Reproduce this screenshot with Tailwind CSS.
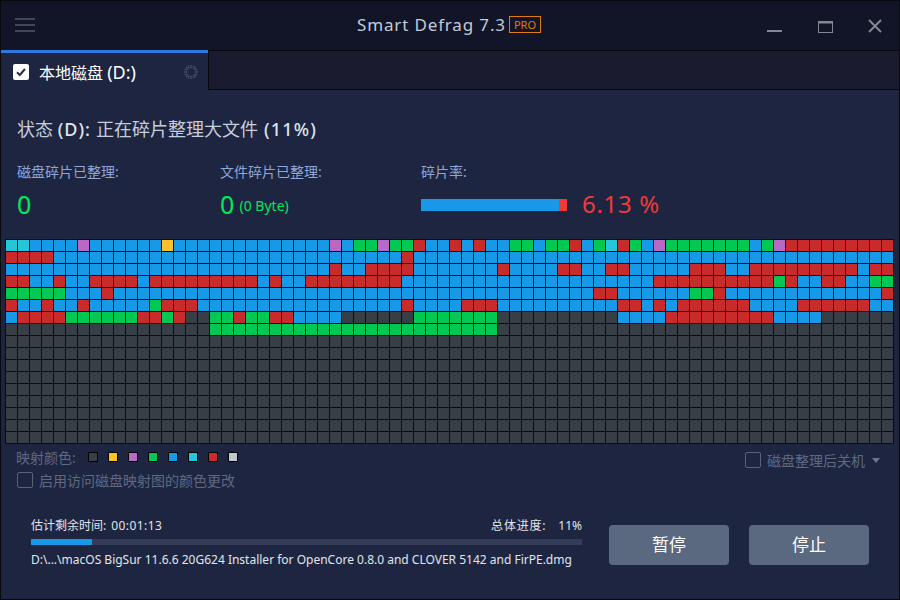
<!DOCTYPE html>
<html lang="zh">
<head>
<meta charset="utf-8">
<script src="https://cdn.jsdelivr.net/npm/@tailwindcss/browser@4"></script>
</head>
<body class="m-0 bg-[#1e2540]">
<div class="w-[900px] h-[600px] overflow-hidden flex flex-col border border-[#08090f] bg-[#1e2540] font-['Noto_Sans','Noto_Sans_CJK_SC',sans-serif] text-[#c8d0dc]">

  <!-- Title bar -->
  <header class="h-[49px] shrink-0 bg-[#121527] flex items-center pl-[14px] relative">
    <div class="flex flex-col gap-1 w-5 -mt-px">
      <span class="h-[2px] bg-[#41465a]"></span>
      <span class="h-[2px] bg-[#41465a]"></span>
      <span class="h-[2px] bg-[#41465a]"></span>
    </div>
    <div class="ml-[322px] flex items-center -mt-[2px]">
      <span class="text-[17px] tracking-[0.85px] text-[#c4ccd8]">Smart Defrag 7.3</span>
      <span class="ml-[3px] border border-[#e07b10] text-[#e07b10] text-[11px] leading-[15px] px-[4px]">PRO</span>
    </div>
    <div class="ml-auto flex items-center">
      <svg class="w-[16px] h-[16px] mr-[35px] mt-[1px]" viewBox="0 0 16 16"><rect x="0" y="12" width="15" height="2" fill="#808894"/></svg>
      <svg class="w-[16px] h-[16px] mr-[34px] mt-[1px]" viewBox="0 0 16 16" fill="none"><rect x="0.5" y="3.5" width="14" height="11" stroke="#808894"/><rect x="0" y="3" width="15" height="2.5" fill="#808894"/></svg>
      <svg class="w-[14px] h-[14px] mr-[17px] mt-[1px]" viewBox="0 0 14 14" fill="none"><path d="M1 1L13 13M13 1L1 13" stroke="#808894" stroke-width="2"/></svg>
    </div>
  </header>

  <!-- Tabs -->
  <nav class="h-[41px] shrink-0 flex border-t border-[#08090f] bg-[#1e2540]">
    <div class="w-[207px] h-full border-t-[3px] border-[#2a78e0] -mt-px flex items-center pl-[12px] shrink-0">
      <span class="w-4 h-4 rounded-[2px] bg-white flex items-center justify-center">
        <svg class="w-3 h-3" viewBox="0 0 12 12" fill="none"><path d="M2 6.2L4.8 9L10 3" stroke="#2a3048" stroke-width="2"/></svg>
      </span>
      <span class="ml-[10px] text-white text-[16px] leading-none">本地磁盘 <span class="text-[18px]">(D:)</span></span>
      <svg class="w-[16px] h-[16px] ml-auto mr-[9px]" viewBox="0 0 16 16" fill="none" stroke="#454d66">
        <path d="M8 1v3.5M8 11.5V15M1 8h3.5M11.5 8H15M3 3l2.4 2.4M10.6 10.6L13 13M13 3l-2.4 2.4M5.4 10.6L3 13M5 1.6l1 2.4M11 14.4L10 12M1.6 11L4 10M14.4 5L12 6M11 1.6L10 4M5 14.4L6 12M1.6 5L4 6M14.4 11L12 10" stroke-width="1.3"/>
      </svg>
    </div>
    <div class="flex-1 h-[39px] bg-[#1a1b2e] border-l border-b border-[#08090f]"></div>
  </nav>

  <!-- Status -->
  <main class="flex-1 flex flex-col">
    <p class="h-[29px] mt-[24px] ml-[16px] text-[18px] leading-[29px] text-[#c6cedc] whitespace-nowrap">状态 <span class="font-medium tracking-[1px] text-[#dde3ec]">(D):</span><span class="ml-[5px]">正在碎片整理大文件</span><span class="ml-[6px] font-medium tracking-[1.2px] text-[#dde3ec]">(11%)</span></p>

    <section class="mt-[18px] ml-[16px] h-[61px] flex">
      <div class="w-[203px]">
        <p class="text-[14px] leading-5 text-[#8ea6d8]">磁盘碎片已整理:</p>
        <p class="mt-[5px] text-[25px] leading-[34px] text-[#00e85c]">0</p>
      </div>
      <div class="w-[201px]">
        <p class="text-[14px] leading-5 text-[#8ea6d8]">文件碎片已整理:</p>
        <p class="mt-[5px] leading-[34px] text-[#00e85c]"><span class="text-[25px]">0</span> <span class="inline-block -translate-y-[3px] ml-px text-[14px]">(0 Byte)</span></p>
      </div>
      <div>
        <p class="text-[14px] leading-5 text-[#8ea6d8]">碎片率:</p>
        <div class="mt-[5px] flex items-center h-[34px]">
          <div class="w-[146px] h-3 flex mt-[2px]">
            <span class="w-[138px] bg-[#1799e8]"></span>
            <span class="w-2 bg-[#f03a3a]"></span>
          </div>
          <span class="ml-[15px] text-[24px] tracking-[0.7px] text-[#f03a3a]">6.13 %</span>
        </div>
      </div>
    </section>

    <!-- Disk map -->
    <div id="map" class="mt-[16px] ml-[4px] w-[889px] p-px grid grid-cols-[repeat(74,11px)] auto-rows-[11px] gap-px bg-[#0b0c10]"></div>

    <!-- Legend -->
    <section class="flex justify-between mt-[3px] ml-[15px] h-[52px]">
      <div>
        <div class="flex items-center h-[20px] text-[14px] text-[#5f6980]">
          <span class="w-[73px]">映射颜色:</span>
          <span class="flex gap-[12px]">
            <i class="block w-[8px] h-[8px] outline outline-black bg-[#383e46]"></i>
            <i class="block w-[8px] h-[8px] outline outline-black bg-[#ffc02a]"></i>
            <i class="block w-[8px] h-[8px] outline outline-black bg-[#ba68c8]"></i>
            <i class="block w-[8px] h-[8px] outline outline-black bg-[#00c853]"></i>
            <i class="block w-[8px] h-[8px] outline outline-black bg-[#1799e8]"></i>
            <i class="block w-[8px] h-[8px] outline outline-black bg-[#26c6da]"></i>
            <i class="block w-[8px] h-[8px] outline outline-black bg-[#c92a2a]"></i>
            <i class="block w-[8px] h-[8px] outline outline-black bg-[#c0c8d0]"></i>
          </span>
        </div>
        <div class="flex items-center mt-[3px] h-[20px] ml-[1px] text-[14px] text-[#5f6980]">
          <span class="w-4 h-4 rounded-[2px] border border-[#5a6478]"></span>
          <span class="ml-[6px]">启用访问磁盘映射图的颜色更改</span>
        </div>
      </div>
      <div class="flex items-center h-[20px] mt-[3px] mr-[19px] text-[14px] text-[#5f6980]">
        <span class="w-4 h-4 rounded-[2px] border border-[#5a6478]"></span>
        <span class="ml-[6px]">磁盘整理后关机</span>
        <svg class="w-2 h-[5px] ml-[7px]" viewBox="0 0 8 5"><path d="M0 0h8L4 5z" fill="#6a7488"/></svg>
      </div>
    </section>

    <!-- Bottom -->
    <section class="flex mt-[17px] ml-[30px]">
      <div class="w-[551px]">
        <div class="flex justify-between h-[20px] text-[12px] leading-[20px] text-[#e0e5ec]">
          <span>估计剩余时间: <span class="ml-[2px] tracking-[0.4px]">00:01:13</span></span>
          <span class="flex"><span class="tracking-[0.8px]">总体进度:</span><span class="ml-[12px]">11%</span></span>
        </div>
        <div class="mt-[3px] h-[6px] bg-[#343c58]"><div class="w-[61px] h-full bg-[#1799e8]"></div></div>
        <p class="mt-[6px] text-[12px] leading-[18px] text-[#e0e5ec] whitespace-nowrap">D:\...\macOS BigSur 11.6.6 20G624 Installer for OpenCore 0.8.0 and CLOVER 5142 and FirPE.dmg</p>
      </div>
      <div class="flex gap-5 ml-[27px] mt-[9px]">
        <button class="w-[120px] h-10 rounded-[4px] bg-[#5a6880] text-white text-[17px]">暂停</button>
        <button class="w-[120px] h-10 rounded-[4px] bg-[#5a6880] text-white text-[17px]">停止</button>
      </div>
    </section>
  </main>
</div>
<script>
  var colours = {
    k: 'bg-[#383e46]', b: 'bg-[#1799e8]', r: 'bg-[#c92a2a]', g: 'bg-[#00c853]',
    c: 'bg-[#26c6da]', p: 'bg-[#ba68c8]', y: 'bg-[#ffc02a]'
  };
  var rows = [
    'c2 b4 p1 b6 y1 b13 p1 b1 g2 p1 g2 r1 b2 r1 b1 r1 b2 g2 b1 g2 r1 b1 g1 c1 r1 g1 b1 p1 g7 b1 g1 p1 r9',
    'r4 b29 r1 b40',
    'b27 r1 b2 r4 b7 r1 b4 r2 b2 r2 b5 r3 b2 r9 b1 r2',
    'r2 b2 r1 b2 r4 b1 r9 b1 r1 b2 r8 b21 r10 g1 r1 b2 r2 b2 g2',
    'g5 b3 r1 b40 r2 b6 g2 r1 b13 r1',
    'r1 b2 r1 b2 r1 b5 g1 r3 b17 r1 b4 r3 b10 r2 b1 r1 b1 r6 b4 r6 b2',
    'b1 r4 g6 r2 g1 r1 k2 g2 r1 g2 r2 b4 k6 g7 k10 b4 r9 b4 k6',
    'k17 g24 k33'
  ];
  for (var i = 0; i < 9; i++) rows.push('k74');
  var html = '';
  rows.forEach(function (row) {
    row.split(' ').forEach(function (run) {
      var n = parseInt(run.slice(1), 10);
      for (var j = 0; j < n; j++) html += '<div class="' + colours[run[0]] + '"></div>';
    });
  });
  document.getElementById('map').innerHTML = html;
</script>
</body>
</html>
